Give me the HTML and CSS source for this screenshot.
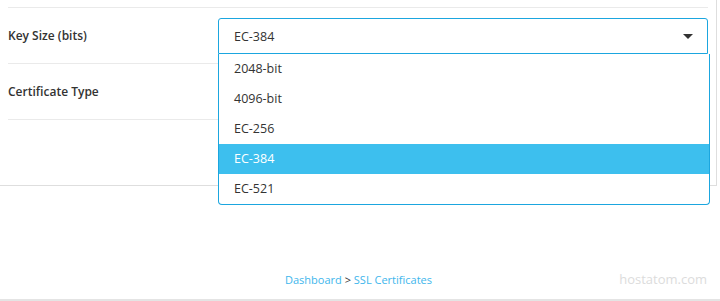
FILE: index.html
```html
<!DOCTYPE html>
<html>
<head>
<meta charset="utf-8">
<link rel="stylesheet" href="styles.css">
</head>
<body>
<div class="page">
  <div class="card">
    <div class="form">
      <div class="row">
        <div class="label">Key Size (bits)</div>
        <div class="field">
          <div class="select-wrap">
            <div class="select">
              <span>EC-384</span>
              <span class="caret"></span>
            </div>
            <ul class="menu">
              <li>2048-bit</li>
              <li>4096-bit</li>
              <li>EC-256</li>
              <li class="active">EC-384</li>
              <li>EC-521</li>
            </ul>
          </div>
        </div>
      </div>
      <div class="row">
        <div class="label">Certificate Type</div>
        <div class="field"></div>
      </div>
    </div>
  </div>
  <div class="footer">
    <div class="spacer"></div>
    <div class="crumbs"><a>Dashboard</a> &gt; <a>SSL Certificates</a></div>
    <div class="brand">hostatom.com</div>
  </div>
</div>
</body>
</html>
```
FILE: styles.css
```css
html, body {
  margin: 0;
  padding: 0;
  background: #fff;
}
body {
  font-family: "Open Sans", "Noto Sans", sans-serif;
  font-size: 12px;
  color: #333;
}
.page {
  width: 720px;
  height: 301px;
  display: flex;
  flex-direction: column;
  overflow: hidden;
}
.card {
  box-sizing: border-box;
  width: 717px;
  height: 186px;
  flex: none;
  border-right: 1px solid #dedede;
  border-bottom: 1px solid #dedede;
  padding: 7px 0 0 8px;
}
.form {
  width: 700px;
  border-bottom: 1px solid #eaeaea;
}
.row {
  box-sizing: border-box;
  height: 56px;
  display: grid;
  grid-template-columns: 210px 490px;
  border-top: 1px solid #eaeaea;
}
.label {
  font-weight: 600;
  align-self: center;
  line-height: 16px;
}
.field {
  position: relative;
}
.select-wrap {
  position: relative;
  margin-top: 10px;
}
.select {
  box-sizing: border-box;
  height: 36px;
  border: 1px solid #1ba6df;
  border-radius: 3px 3px 0 0;
  display: flex;
  align-items: center;
  justify-content: space-between;
  padding: 0 14px 0 15px;
  font-size: 12.5px;
}
.caret {
  width: 0;
  height: 0;
  border-left: 5px solid transparent;
  border-right: 5px solid transparent;
  border-top: 5px solid #333;
  margin-top: 1px;
}
.menu {
  position: absolute;
  top: 100%;
  left: 0;
  width: 492px;
  box-sizing: border-box;
  margin: 0;
  padding: 0;
  list-style: none;
  background: #fff;
  border: 1px solid #1ba6df;
  border-top: none;
  border-radius: 0 0 4px 4px;
  overflow: hidden;
  z-index: 2;
}
.menu li {
  height: 30px;
  line-height: 30px;
  padding-left: 15px;
  font-size: 12.5px;
  color: #333;
}
.menu li.active {
  background: #3dbfee;
  color: #fff;
}
.footer {
  flex: none;
  box-sizing: border-box;
  height: 115px;
  border-bottom: 2px solid #e4e4e4;
  display: grid;
  grid-template-columns: 1fr auto 1fr;
  align-items: end;
  padding-bottom: 12px;
}
.crumbs {
  font-size: 11px;
  line-height: 15px;
  color: #333;
  margin-right: 3px;
}
.crumbs a {
  color: #3eb6ec;
}
.brand {
  justify-self: end;
  padding-right: 13px;
  font-size: 13px;
  line-height: 17px;
  color: #dcdcdc;
  margin-bottom: -1px;
}
```
